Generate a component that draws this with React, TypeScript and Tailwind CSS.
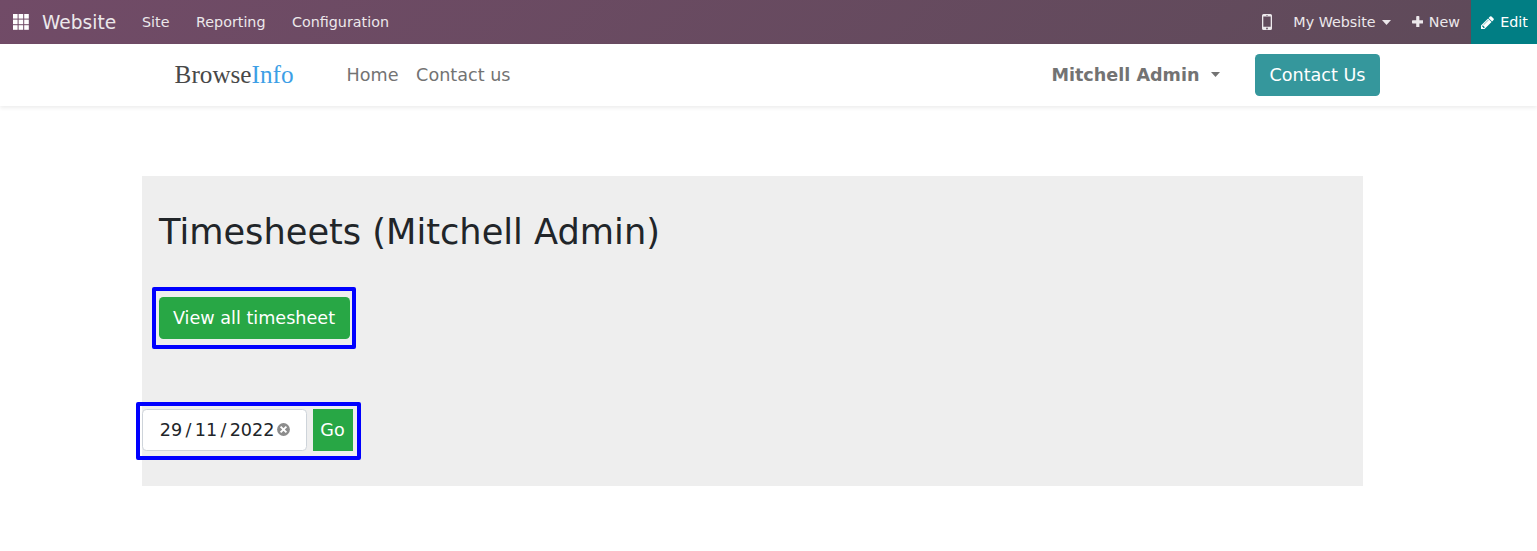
import React from "react";

const font = "font-['DejaVu_Sans',sans-serif]";

function AppsIcon() {
  return (
    <svg width="16" height="16" viewBox="0 0 16 16" fill="#fff" className="shrink-0">
      {[0, 5.6, 11.2].map((y) =>
        [0, 5.6, 11.2].map((x) => <rect key={`${x}-${y}`} x={x} y={y} width="4.6" height="4.6" />)
      )}
    </svg>
  );
}

function MobileIcon() {
  return (
    <svg width="10" height="16" viewBox="0 0 10 16" className="shrink-0">
      <path
        fillRule="evenodd"
        fill="#ece8eb"
        d="M1.6 0h6.8A1.6 1.6 0 0 1 10 1.6v12.8A1.6 1.6 0 0 1 8.4 16H1.6A1.6 1.6 0 0 1 0 14.4V1.6A1.6 1.6 0 0 1 1.6 0zM1.3 2.4v10.4h7.4V2.4zM4 .9v.6h2v-.6zM5 13.6a.9.9 0 1 0 0 1.8.9.9 0 0 0 0-1.8z"
      />
    </svg>
  );
}

function PlusIcon() {
  return (
    <svg width="11.6" height="11.6" viewBox="192 128 1408 1408" fill="currentColor" className="mb-px shrink-0">
      <path d="M1600 736v192q0 40-28 68t-68 28h-416v416q0 40-28 68t-68 28h-192q-40 0-68-28t-28-68v-416h-416q-40 0-68-28t-28-68v-192q0-40 28-68t68-28h416v-416q0-40 28-68t68-28h192q40 0 68 28t28 68v416h416q40 0 68 28t28 68z" />
    </svg>
  );
}

function PencilIcon() {
  return (
    <svg width="13" height="13" viewBox="128 128 1536 1536" fill="currentColor" className="shrink-0">
      <path d="M491 1536l91-91-235-235-91 91v107h128v128h107zm523-928q0-22-22-22-10 0-17 7l-542 542q-7 7-7 17 0 22 22 22 10 0 17-7l542-542q7-7 7-17zm-54-192l416 416-832 832h-416v-416zm683 96q0 53-37 90l-166 166-416-416 166-165q36-38 90-38 53 0 91 38l235 234q37 39 37 91z" />
    </svg>
  );
}

function Caret({ className }: { className: string }) {
  return (
    <svg width="9" height="5" viewBox="0 0 9 5" fill="currentColor" className={className}>
      <path d="M0 0h9L4.5 5z" />
    </svg>
  );
}

function ClearIcon() {
  return (
    <svg width="13" height="13" viewBox="0 0 13 13" className="mb-px ml-[3px] shrink-0">
      <circle cx="6.5" cy="6.5" r="6.4" fill="#8c8c8c" />
      <path d="M3.6 3.6l5.8 5.8M9.4 3.6L3.6 9.4" stroke="#fff" strokeWidth="1.9" />
    </svg>
  );
}

function SystemBar() {
  return (
    <nav className="flex h-11 items-center whitespace-nowrap bg-[linear-gradient(135deg,#714B67,#5e4a59)] pl-[13px] text-[14.3px] text-[#ece8eb]">
      <AppsIcon />
      <span className="ml-[13px] w-[100px] pt-px text-[18.6px]">Website</span>
      <span className="w-[54px] pt-px">Site</span>
      <span className="w-24 pt-px">Reporting</span>
      <span className="pt-px">Configuration</span>
      <div className="ml-auto flex h-full items-center">
        <MobileIcon />
        <span className="ml-[21px] pt-px">My Website</span>
        <Caret className="ml-[6.4px] mr-[20.6px] shrink-0" />
        <PlusIcon />
        <span className="ml-[5.6px] pt-px">New</span>
        <div className="ml-[11px] flex h-full w-[66px] items-center bg-[#017e84] pl-[10px] text-white">
          <PencilIcon />
          <span className="ml-[6.2px] pt-px">Edit</span>
        </div>
      </div>
    </nav>
  );
}

function SiteHeader() {
  return (
    <header className="flex h-[62px] items-center whitespace-nowrap bg-white pl-[174.6px] pr-[157px] text-[17.6px] text-[#737373] shadow-[0_2px_4px_rgba(0,0,0,0.075)]">
      <span className="w-[172px] font-['Liberation_Serif',serif] text-[25.2px] text-[#484848]">
        Browse<span className="text-[#3d9fe6]">Info</span>
      </span>
      <span className="w-[69.5px]">Home</span>
      <span>Contact us</span>
      <span className="ml-auto font-bold">Mitchell Admin</span>
      <Caret className="mb-[2px] ml-[11.5px] mr-[35px] shrink-0" />
      <button className="h-[42px] w-[125px] rounded-[4.4px] bg-[#35979c] text-white">Contact Us</button>
    </header>
  );
}

export default function App() {
  return (
    <div className={`h-[551px] overflow-hidden bg-white ${font}`}>
      <SystemBar />
      <SiteHeader />
      <main className="ml-[142px] mt-[70px] h-[310px] w-[1221px] bg-[#eee] pt-[35px] text-[17.6px] text-[#212529]">
        <h1 className="ml-[17px] h-[42px] whitespace-nowrap text-[35.2px] leading-[42px]">Timesheets (Mitchell Admin)</h1>
        <div className="ml-[10px] mt-[34px] flex h-[62px] w-[204px] items-center justify-center rounded-[2px] border-4 border-[#00f]">
          <button className="h-[42px] w-[191px] whitespace-nowrap rounded-[4.4px] bg-[#28a745] text-white">View all timesheet</button>
        </div>
        <div className="-ml-[6px] mt-[53px] flex h-[58px] w-[225px] rounded-[2px] border-4 border-[#00f] pl-[2px] pt-[3px]">
          <div className="flex h-[42px] w-[165px] items-center rounded-[4.4px] border border-[#ced4da] bg-white pl-[16.8px]">
            <span>29</span>
            <span className="mx-[3.3px]">/</span>
            <span>11</span>
            <span className="mx-[3.3px]">/</span>
            <span>2022</span>
            <ClearIcon />
          </div>
          <button className="ml-[6px] h-[42px] w-10 bg-[#28a745] pr-px text-white">Go</button>
        </div>
      </main>
    </div>
  );
}
